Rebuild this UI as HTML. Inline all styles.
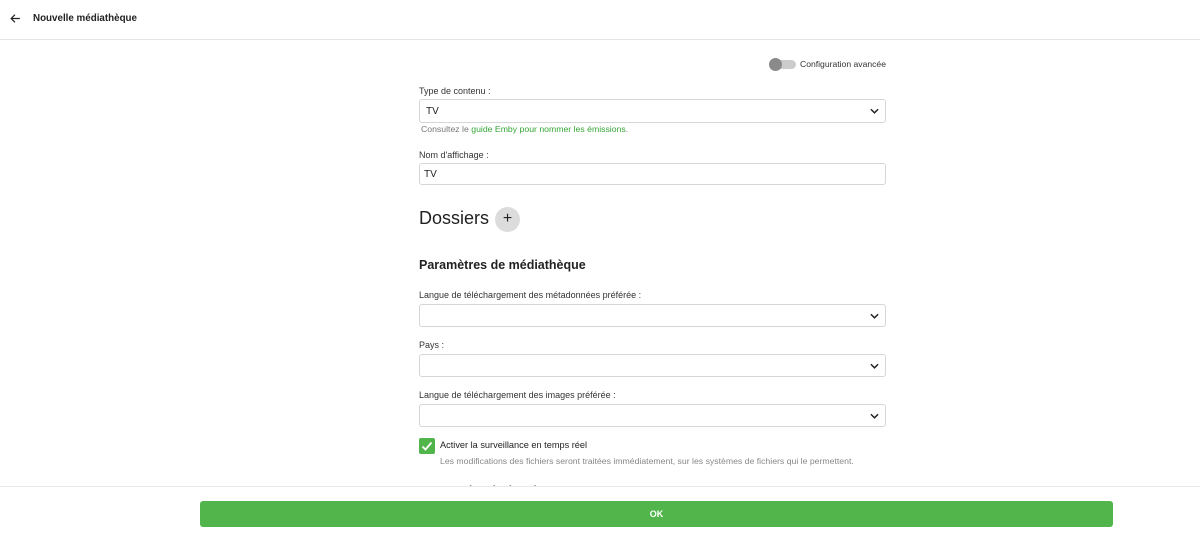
<!DOCTYPE html><html><head><meta charset="utf-8"><style>
*{box-sizing:border-box;margin:0;padding:0}
body{width:1200px;height:533px;overflow:hidden;background:#fff;font-family:"Liberation Sans",sans-serif;color:#222;position:relative;font-size:10px}
.a{position:absolute}
.lbl{position:absolute;left:419px;font-size:9px;color:#333}
.sel{position:absolute;left:419px;width:467px;border:1px solid #d6d6d6;border-radius:3px;background:#fff}
.chev{position:absolute;right:6px;top:50%;margin-top:-4px}
</style></head><body>
<div class="a" style="left:0;top:0;width:1200px;height:40px;border-bottom:1px solid #e4e4e4"></div>
<svg class="a" style="left:9px;top:12px" width="13" height="13" viewBox="0 0 24 24"><path d="M20 12H5M11 5l-7 7 7 7" stroke="#222" stroke-width="2.2" fill="none"/></svg>
<div class="a" style="left:33px;top:13px;font-size:9.8px;font-weight:bold">Nouvelle médiathèque</div>

<div class="a" style="left:771px;top:60px;width:25px;height:9px;border-radius:5px;background:#ccc"></div>
<div class="a" style="left:769px;top:58px;width:13px;height:13px;border-radius:50%;background:#8a8a8a"></div>
<div class="a" style="left:800px;top:59px;font-size:8.6px;color:#333">Configuration avancée</div>

<div class="lbl" style="top:86px">Type de contenu :</div>
<div class="sel" style="top:99px;height:24px"><span class="a" style="left:6px;top:6px;font-size:10px">TV</span><svg class="chev" width="9" height="8" viewBox="0 0 10 8"><path d="M1 2l4 4 4-4" stroke="#222" stroke-width="1.6" fill="none"/></svg></div>
<div class="a" style="left:421px;top:124px;font-size:8.7px;color:#777">Consultez le <span style="color:#36a536">guide Emby pour nommer les émissions</span>.</div>

<div class="lbl" style="top:150px">Nom d'affichage :</div>
<div class="sel" style="top:163px;height:22px"><span class="a" style="left:4px;top:5px;font-size:10px">TV</span></div>

<div class="a" style="left:419px;top:208px;font-size:18px;color:#222">Dossiers</div>
<div class="a" style="left:495px;top:207px;width:25px;height:25px;border-radius:50%;background:#dcdcdc;text-align:center;line-height:24px;font-size:16px">+</div>

<div class="a" style="left:419px;top:258px;font-size:12.5px;font-weight:bold">Paramètres de médiathèque</div>

<div class="lbl" style="top:290px">Langue de téléchargement des métadonnées préférée :</div>
<div class="sel" style="top:304px;height:23px"><svg class="chev" width="9" height="8" viewBox="0 0 10 8"><path d="M1 2l4 4 4-4" stroke="#222" stroke-width="1.6" fill="none"/></svg></div>
<div class="lbl" style="top:340px">Pays :</div>
<div class="sel" style="top:354px;height:23px"><svg class="chev" width="9" height="8" viewBox="0 0 10 8"><path d="M1 2l4 4 4-4" stroke="#222" stroke-width="1.6" fill="none"/></svg></div>
<div class="lbl" style="top:390px">Langue de téléchargement des images préférée :</div>
<div class="sel" style="top:404px;height:23px"><svg class="chev" width="9" height="8" viewBox="0 0 10 8"><path d="M1 2l4 4 4-4" stroke="#222" stroke-width="1.6" fill="none"/></svg></div>

<div class="a" style="left:419px;top:438px;width:16px;height:16px;border-radius:2px;background:#52b54b"><svg width="16" height="16" viewBox="0 0 16 16"><path d="M3.5 8.5l3 3 6-7" stroke="#fff" stroke-width="1.8" fill="none"/></svg></div>
<div class="a" style="left:440px;top:440px;font-size:9.2px;color:#222">Activer la surveillance en temps réel</div>
<div class="a" style="left:440px;top:456px;font-size:8.7px;color:#888">Les modifications des fichiers seront traitées immédiatement, sur les systèmes de fichiers qui le permettent.</div>
<div class="a" style="left:419px;top:484px;font-size:10.5px;font-weight:bold">Lecteurs de métadonnées</div>

<div class="a" style="left:0;top:486px;width:1200px;height:47px;background:#fff;border-top:1px solid #e8e8e8"></div>
<div class="a" style="left:200px;top:501px;width:913px;height:26px;border-radius:3px;background:#52b54b;color:#fff;font-weight:bold;font-size:9px;text-align:center;line-height:26px">OK</div>
</body></html>
